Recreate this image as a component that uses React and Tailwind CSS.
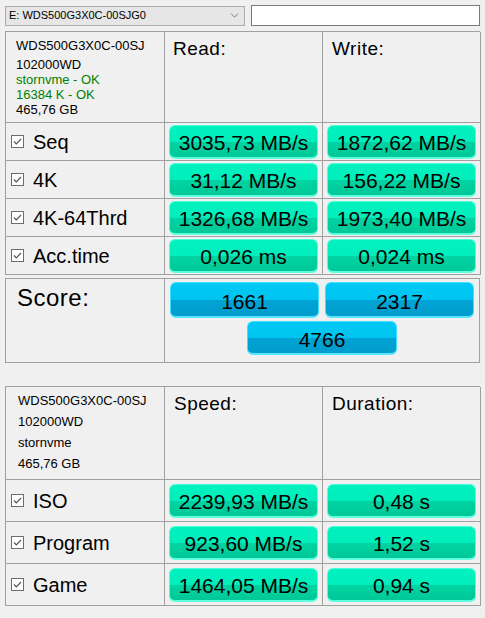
import { ChevronDown } from 'lucide-react';

const font = { fontFamily: '"Liberation Sans", Arial, sans-serif' };

function Check() {
  return (
    <svg width="13" height="13" viewBox="0 0 13 13" className="shrink-0">
      <rect x="0.5" y="0.5" width="12" height="12" fill="#fff" stroke="#6d6d6d" />
      <path d="M3 6.5 L5.3 8.8 L10 4" fill="none" stroke="#555" strokeWidth="1.2" />
    </svg>
  );
}

function Pill({ children, blue = false, className = '' }) {
  return (
    <div
      className={
        'flex items-center justify-center pt-[3px] rounded-[6px] text-[21px] leading-none text-black ' +
        (blue
          ? 'bg-[linear-gradient(to_bottom,#00c8f4_0%,#00c4f0_50%,#00a4d4_52%,#009ccc_100%)] border border-[#3fe0ff] border-b-2 border-b-[#55e6ff] '
          : 'bg-[linear-gradient(to_bottom,#00f2c0_0%,#00eebb_50%,#00d4a2_52%,#00c898_100%)] border border-[#4cffd6] border-b-2 border-b-[#5dffdc] ') +
        className
      }
    >
      {children}
    </div>
  );
}

function Label({ text }) {
  return (
    <div className="flex items-center gap-[9px] pl-[5px] border-r border-b border-[#a0a0a0]">
      <Check />
      <span className="text-[20px] leading-none text-black">{text}</span>
    </div>
  );
}

function TestRow({ label, a, b, h }) {
  return (
    <>
      <Label text={label} />
      <div className={`flex items-center px-[4px] border-r border-b border-[#a0a0a0] ${h}`}>
        <Pill className="w-full h-[34px]">{a}</Pill>
      </div>
      <div className={`flex items-center px-[4px] border-r border-b border-[#a0a0a0] ${h}`}>
        <Pill className="w-full h-[34px]">{b}</Pill>
      </div>
    </>
  );
}

const seqRows = [
  ['Seq', '3035,73 MB/s', '1872,62 MB/s'],
  ['4K', '31,12 MB/s', '156,22 MB/s'],
  ['4K-64Thrd', '1326,68 MB/s', '1973,40 MB/s'],
  ['Acc.time', '0,026 ms', '0,024 ms'],
];

const copyRows = [
  ['ISO', '2239,93 MB/s', '0,48 s'],
  ['Program', '923,60 MB/s', '1,52 s'],
  ['Game', '1464,05 MB/s', '0,94 s'],
];

export default function App() {
  return (
    <div className="w-[485px] h-[618px] bg-[#f0f0f0] overflow-hidden" style={font}>
      {/* drive picker + free text box */}
      <div className="flex items-center gap-[6px] pl-[5px] pt-[4px] h-[26px]">
        <div className="w-[240px] h-[20px] mt-[1px] flex items-center justify-between bg-[#e6e6e6] border border-[#acacac] pl-[3px] pr-[3px]">
          <span className="text-[11px] text-black">E: WDS500G3X0C-00SJG0</span>
          <ChevronDown size={13} strokeWidth={1.3} color="#555" />
        </div>
        <div className="w-[229px] h-[21px] bg-white border border-[#7a7a7a]" />
      </div>

      {/* benchmark table */}
      <div className="ml-[5px] mt-[5px] w-[475px] grid grid-cols-[159px_158px_158px] grid-rows-[91px_38px_38px_38px_38px] border-l border-t border-[#a0a0a0]">
        <div className="border-r border-b border-[#a0a0a0] pl-[10px] pt-[6px] text-[13px] leading-[15px] text-black">
          <div className="mb-[4px]">WDS500G3X0C-00SJ</div>
          <div>102000WD</div>
          <div className="text-[#008000]">stornvme - OK</div>
          <div className="text-[#008000]">16384 K - OK</div>
          <div>465,76 GB</div>
        </div>
        <div className="border-r border-b border-[#a0a0a0] pl-[8px] pt-[3px] text-[19px] tracking-[0.5px]">Read:</div>
        <div className="border-r border-b border-[#a0a0a0] pl-[9px] pt-[3px] text-[19px] tracking-[0.5px]">Write:</div>
        {seqRows.map(([l, a, b]) => (
          <TestRow key={l} label={l} a={a} b={b} h="h-[38px]" />
        ))}
      </div>

      {/* score box */}
      <div className="ml-[5px] mt-[3px] w-[475px] h-[85px] flex border border-[#a0a0a0]">
        <div className="w-[159px] border-r border-[#a0a0a0] pl-[11px] pt-[5px] text-[24px] leading-[28px] tracking-[0.5px]">
          Score:
        </div>
        <div className="flex-1 flex flex-col items-center pt-[3px] gap-[3px]">
          <div className="flex gap-[6px]">
            <Pill blue className="w-[149px] h-[36px] text-[20px]">1661</Pill>
            <Pill blue className="w-[149px] h-[36px] text-[20px]">2317</Pill>
          </div>
          <Pill blue className="w-[150px] h-[34px] text-[20px]">4766</Pill>
        </div>
      </div>

      {/* copy benchmark table */}
      <div className="ml-[5px] mt-[23px] w-[475px] grid grid-cols-[159px_158px_158px] grid-rows-[93px_42px_42px_42px] border-l border-t border-[#a0a0a0]">
        <div className="border-r border-b border-[#a0a0a0] pl-[12px] pt-[3px] text-[13px] leading-[21px] text-black">
          <div>WDS500G3X0C-00SJ</div>
          <div>102000WD</div>
          <div>stornvme</div>
          <div>465,76 GB</div>
        </div>
        <div className="border-r border-b border-[#a0a0a0] pl-[9px] pt-[3px] text-[19px] tracking-[0.5px]">Speed:</div>
        <div className="border-r border-b border-[#a0a0a0] pl-[9px] pt-[3px] text-[19px] tracking-[0.5px]">Duration:</div>
        {copyRows.map(([l, a, b]) => (
          <TestRow key={l} label={l} a={a} b={b} h="h-[42px]" />
        ))}
      </div>
    </div>
  );
}
